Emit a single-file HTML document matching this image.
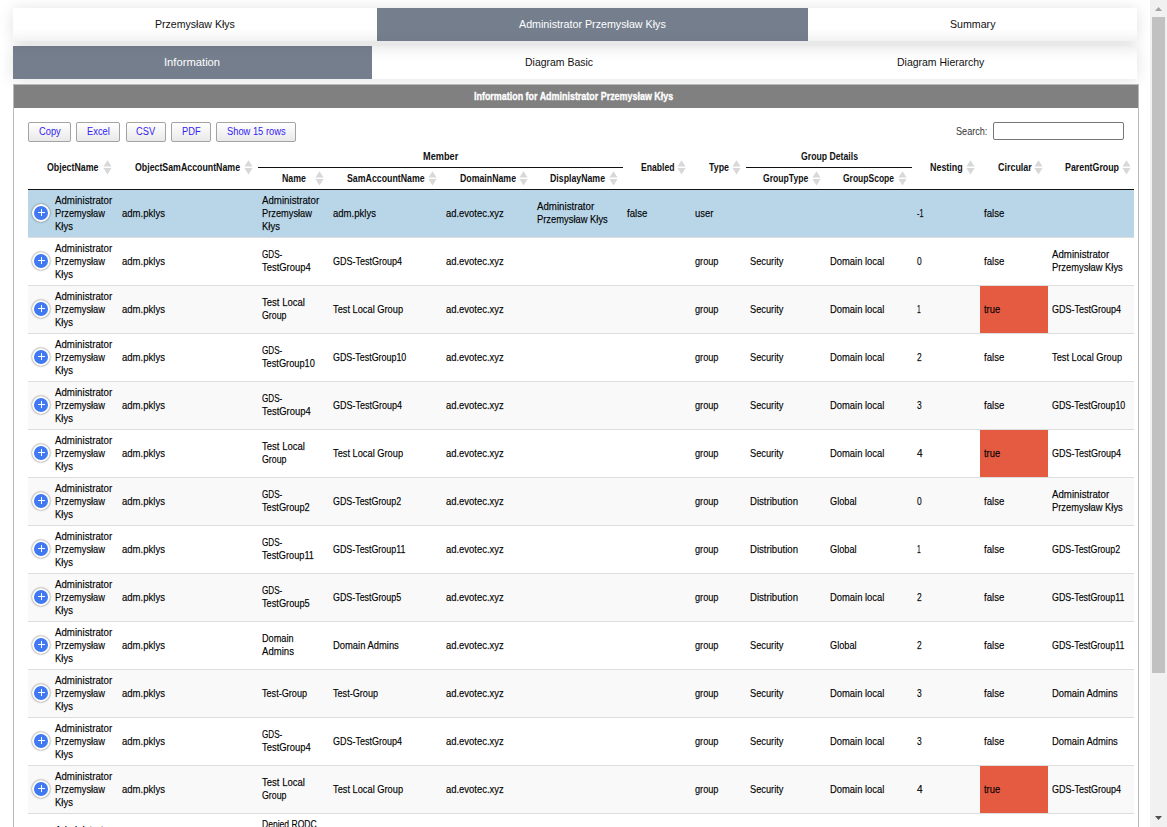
<!DOCTYPE html>
<html><head><meta charset="utf-8"><title>Information</title><style>
html,body{margin:0;padding:0;}
body{width:1167px;height:827px;overflow:hidden;position:relative;background:#fff;font-family:"Liberation Sans",sans-serif;}
.r{position:absolute;}
.x{position:absolute;white-space:pre;transform-origin:0 0;line-height:13px;font-family:"Liberation Sans",sans-serif;}
.t{font-size:10.5px;color:#000;-webkit-text-stroke:0.25px rgba(0,0,0,0.6);}
.s{font-size:10.5px;color:#333;}
.ti{font-size:10.5px;font-weight:bold;color:#fff;-webkit-text-stroke:0.3px #fff;}
.h{font-size:10.5px;font-weight:bold;color:#111;}
.tab{font-size:11px;color:#111;}
.bt{font-size:10px;color:#3322f2;}
.btn{position:absolute;box-sizing:border-box;border:1px solid #a3a3a3;border-radius:2px;background:linear-gradient(#ffffff,#e9e9e9);}
.pl{position:absolute;width:14px;height:14px;border:2px solid #fff;border-radius:50%;background:#4179f3;box-shadow:0 0 2px #555;}
</style></head>
<body>
<div class="r" style="left:13px;top:8px;width:1124px;height:33px;background:#fff;"></div>
<div class="r" style="left:13px;top:46px;width:1124px;height:33px;background:#fff;"></div>
<div class="r" style="left:377px;top:8px;width:431px;height:33px;background:#747e8d;"></div>
<div class="r" style="left:13px;top:46px;width:359px;height:33px;background:#747e8d;"></div>
<div class="r" style="left:13px;top:8px;width:1124px;height:33px;box-shadow:0 1px 15px rgba(0,0,0,0.12);"></div>
<div class="r" style="left:13px;top:46px;width:1124px;height:33px;box-shadow:0 1px 15px rgba(0,0,0,0.12);"></div>
<div class="r" style="left:13px;top:27px;width:364px;height:14px;background:linear-gradient(rgba(0,0,0,0),rgba(0,0,0,0.03));"></div>
<div class="r" style="left:808px;top:27px;width:329px;height:14px;background:linear-gradient(rgba(0,0,0,0),rgba(0,0,0,0.03));"></div>
<div class="r" style="left:372px;top:46px;width:765px;height:16px;background:linear-gradient(rgba(0,0,0,0.035),rgba(0,0,0,0));"></div>
<div class="x tab" style="left:154.93px;top:17.59px;transform:scaleX(0.9608)">Przemysław Kłys</div>
<div class="x tab" style="left:519.19px;top:17.79px;transform:scaleX(0.9719);color:#fff">Administrator Przemysław Kłys</div>
<div class="x tab" style="left:949.53px;top:17.59px;transform:scaleX(0.9657)">Summary</div>
<div class="x tab" style="left:164.40px;top:56.19px;transform:scaleX(1.0194);color:#fff">Information</div>
<div class="x tab" style="left:524.66px;top:55.99px;transform:scaleX(0.9509)">Diagram Basic</div>
<div class="x tab" style="left:897.38px;top:55.99px;transform:scaleX(0.9528)">Diagram Hierarchy</div>
<div class="r" style="left:13px;top:84px;width:1124px;height:760px;border:1px solid #b9b9b9;background:#fff;"></div>
<div class="r" style="left:14px;top:85px;width:1124px;height:23px;background:#808080;"></div>
<div class="x ti" style="left:473.76px;top:89.76px;transform:scaleX(0.8507)">Information for Administrator Przemysław Kłys</div>
<div class="btn" style="left:28px;top:122px;width:43px;height:20px"></div>
<div class="x bt" style="left:38.61px;top:125.23px;transform:scaleX(0.9330)">Copy</div>
<div class="btn" style="left:76px;top:122px;width:44px;height:20px"></div>
<div class="x bt" style="left:86.70px;top:125.23px;transform:scaleX(0.9330)">Excel</div>
<div class="btn" style="left:126px;top:122px;width:40px;height:20px"></div>
<div class="x bt" style="left:136.25px;top:125.23px;transform:scaleX(0.9330)">CSV</div>
<div class="btn" style="left:171px;top:122px;width:40px;height:20px"></div>
<div class="x bt" style="left:181.72px;top:125.23px;transform:scaleX(0.9330)">PDF</div>
<div class="btn" style="left:216px;top:122px;width:80px;height:20px"></div>
<div class="x bt" style="left:226.70px;top:125.23px;transform:scaleX(0.9330)">Show 15 rows</div>
<div class="x s" style="left:956.30px;top:124.66px;transform:scaleX(0.8675)">Search:</div>
<div class="r" style="left:993px;top:122px;width:131px;height:18px;box-sizing:border-box;border:1px solid #767676;border-radius:2px;background:#fff"></div>
<div class="x h" style="left:46.80px;top:161.16px;transform:scaleX(0.8395)">ObjectName</div>
<svg class="r" style="left:102.7px;top:160px" width="9" height="15" viewBox="0 0 9 15"><path d="M4.5 0.3 L8.6 6.6 L0.4 6.6 Z M0.4 8.1 L8.6 8.1 L4.5 14.6 Z" fill="#d8d8d8"/></svg>
<div class="x h" style="left:134.60px;top:161.16px;transform:scaleX(0.8371)">ObjectSamAccountName</div>
<svg class="r" style="left:244.1px;top:160px" width="9" height="15" viewBox="0 0 9 15"><path d="M4.5 0.3 L8.6 6.6 L0.4 6.6 Z M0.4 8.1 L8.6 8.1 L4.5 14.6 Z" fill="#d8d8d8"/></svg>
<div class="x h" style="left:640.60px;top:161.16px;transform:scaleX(0.8212)">Enabled</div>
<svg class="r" style="left:676.6px;top:160px" width="9" height="15" viewBox="0 0 9 15"><path d="M4.5 0.3 L8.6 6.6 L0.4 6.6 Z M0.4 8.1 L8.6 8.1 L4.5 14.6 Z" fill="#d8d8d8"/></svg>
<div class="x h" style="left:708.70px;top:161.16px;transform:scaleX(0.8415)">Type</div>
<svg class="r" style="left:731.9px;top:160px" width="9" height="15" viewBox="0 0 9 15"><path d="M4.5 0.3 L8.6 6.6 L0.4 6.6 Z M0.4 8.1 L8.6 8.1 L4.5 14.6 Z" fill="#d8d8d8"/></svg>
<div class="x h" style="left:930.00px;top:161.16px;transform:scaleX(0.8483)">Nesting</div>
<svg class="r" style="left:966.0px;top:160px" width="9" height="15" viewBox="0 0 9 15"><path d="M4.5 0.3 L8.6 6.6 L0.4 6.6 Z M0.4 8.1 L8.6 8.1 L4.5 14.6 Z" fill="#d8d8d8"/></svg>
<div class="x h" style="left:997.50px;top:161.16px;transform:scaleX(0.8513)">Circular</div>
<svg class="r" style="left:1034.1px;top:160px" width="9" height="15" viewBox="0 0 9 15"><path d="M4.5 0.3 L8.6 6.6 L0.4 6.6 Z M0.4 8.1 L8.6 8.1 L4.5 14.6 Z" fill="#d8d8d8"/></svg>
<div class="x h" style="left:1065.40px;top:161.16px;transform:scaleX(0.8418)">ParentGroup</div>
<svg class="r" style="left:1122.0px;top:160px" width="9" height="15" viewBox="0 0 9 15"><path d="M4.5 0.3 L8.6 6.6 L0.4 6.6 Z M0.4 8.1 L8.6 8.1 L4.5 14.6 Z" fill="#d8d8d8"/></svg>
<div class="x h" style="left:281.70px;top:171.66px;transform:scaleX(0.8397)">Name</div>
<svg class="r" style="left:315.2px;top:171px" width="9" height="15" viewBox="0 0 9 15"><path d="M4.5 0.3 L8.6 6.6 L0.4 6.6 Z M0.4 8.1 L8.6 8.1 L4.5 14.6 Z" fill="#d8d8d8"/></svg>
<div class="x h" style="left:346.80px;top:171.66px;transform:scaleX(0.8363)">SamAccountName</div>
<svg class="r" style="left:428.2px;top:171px" width="9" height="15" viewBox="0 0 9 15"><path d="M4.5 0.3 L8.6 6.6 L0.4 6.6 Z M0.4 8.1 L8.6 8.1 L4.5 14.6 Z" fill="#d8d8d8"/></svg>
<div class="x h" style="left:459.60px;top:171.66px;transform:scaleX(0.8346)">DomainName</div>
<svg class="r" style="left:518.9px;top:171px" width="9" height="15" viewBox="0 0 9 15"><path d="M4.5 0.3 L8.6 6.6 L0.4 6.6 Z M0.4 8.1 L8.6 8.1 L4.5 14.6 Z" fill="#d8d8d8"/></svg>
<div class="x h" style="left:550.00px;top:171.66px;transform:scaleX(0.8344)">DisplayName</div>
<svg class="r" style="left:609.0px;top:171px" width="9" height="15" viewBox="0 0 9 15"><path d="M4.5 0.3 L8.6 6.6 L0.4 6.6 Z M0.4 8.1 L8.6 8.1 L4.5 14.6 Z" fill="#d8d8d8"/></svg>
<div class="x h" style="left:763.20px;top:171.66px;transform:scaleX(0.8188)">GroupType</div>
<svg class="r" style="left:812.4px;top:171px" width="9" height="15" viewBox="0 0 9 15"><path d="M4.5 0.3 L8.6 6.6 L0.4 6.6 Z M0.4 8.1 L8.6 8.1 L4.5 14.6 Z" fill="#d8d8d8"/></svg>
<div class="x h" style="left:843.10px;top:171.66px;transform:scaleX(0.8100)">GroupScope</div>
<svg class="r" style="left:898.0px;top:171px" width="9" height="15" viewBox="0 0 9 15"><path d="M4.5 0.3 L8.6 6.6 L0.4 6.6 Z M0.4 8.1 L8.6 8.1 L4.5 14.6 Z" fill="#d8d8d8"/></svg>
<div class="x h" style="left:423.40px;top:149.96px;transform:scaleX(0.8743)">Member</div>
<div class="x h" style="left:800.70px;top:149.96px;transform:scaleX(0.8280)">Group Details</div>
<div class="r" style="left:258px;top:167px;width:365px;height:1px;background:#111;"></div>
<div class="r" style="left:746px;top:167px;width:166px;height:1px;background:#111;"></div>
<div class="r" style="left:28px;top:189px;width:1106px;height:1px;background:#111;"></div>
<div class="r" style="left:28px;top:190px;width:1106px;height:47px;background:#b8d6e8;"></div>
<div class="r" style="left:28px;top:237px;width:1106px;height:1px;background:#ddd;"></div>
<div class="pl" style="left:32px;top:203.7px"></div>
<div class="r" style="left:38px;top:212.0px;width:7px;height:1px;background:#fff"></div>
<div class="r" style="left:41px;top:209.0px;width:1px;height:7px;background:#fff"></div>
<div class="x t" style="left:55.20px;top:193.96px;transform:scaleX(0.9236)">Administrator</div>
<div class="x t" style="left:55.20px;top:206.96px;transform:scaleX(0.8826)">Przemysław</div>
<div class="x t" style="left:55.20px;top:219.96px;transform:scaleX(0.9016)">Kłys</div>
<div class="x t" style="left:121.60px;top:206.96px;transform:scaleX(0.9094)">adm.pklys</div>
<div class="x t" style="left:262.30px;top:193.96px;transform:scaleX(0.9236)">Administrator</div>
<div class="x t" style="left:262.30px;top:206.96px;transform:scaleX(0.8826)">Przemysław</div>
<div class="x t" style="left:262.30px;top:219.96px;transform:scaleX(0.9016)">Kłys</div>
<div class="x t" style="left:333.30px;top:206.96px;transform:scaleX(0.9094)">adm.pklys</div>
<div class="x t" style="left:446.40px;top:206.96px;transform:scaleX(0.8984)">ad.evotec.xyz</div>
<div class="x t" style="left:537.20px;top:200.46px;transform:scaleX(0.9236)">Administrator</div>
<div class="x t" style="left:537.20px;top:213.46px;transform:scaleX(0.8920)">Przemysław Kłys</div>
<div class="x t" style="left:627.10px;top:206.96px;transform:scaleX(0.9178)">false</div>
<div class="x t" style="left:695.30px;top:206.96px;transform:scaleX(0.8968)">user</div>
<div class="x t" style="left:916.50px;top:206.96px;transform:scaleX(0.6823)">-1</div>
<div class="x t" style="left:984.20px;top:206.96px;transform:scaleX(0.9178)">false</div>
<div class="r" style="left:28px;top:238px;width:1106px;height:47px;background:#fff;"></div>
<div class="r" style="left:28px;top:285px;width:1106px;height:1px;background:#ddd;"></div>
<div class="pl" style="left:32px;top:251.7px"></div>
<div class="r" style="left:38px;top:260.0px;width:7px;height:1px;background:#fff"></div>
<div class="r" style="left:41px;top:257.0px;width:1px;height:7px;background:#fff"></div>
<div class="x t" style="left:55.20px;top:241.96px;transform:scaleX(0.9236)">Administrator</div>
<div class="x t" style="left:55.20px;top:254.96px;transform:scaleX(0.8826)">Przemysław</div>
<div class="x t" style="left:55.20px;top:267.96px;transform:scaleX(0.9016)">Kłys</div>
<div class="x t" style="left:121.60px;top:254.96px;transform:scaleX(0.9094)">adm.pklys</div>
<div class="x t" style="left:262.30px;top:248.46px;transform:scaleX(0.7733)">GDS-</div>
<div class="x t" style="left:262.30px;top:261.46px;transform:scaleX(0.8956)">TestGroup4</div>
<div class="x t" style="left:333.30px;top:254.96px;transform:scaleX(0.8574)">GDS-TestGroup4</div>
<div class="x t" style="left:446.40px;top:254.96px;transform:scaleX(0.8984)">ad.evotec.xyz</div>
<div class="x t" style="left:695.30px;top:254.96px;transform:scaleX(0.8736)">group</div>
<div class="x t" style="left:750.30px;top:254.96px;transform:scaleX(0.8811)">Security</div>
<div class="x t" style="left:830.10px;top:254.96px;transform:scaleX(0.8954)">Domain local</div>
<div class="x t" style="left:916.50px;top:254.96px;transform:scaleX(0.8025)">0</div>
<div class="x t" style="left:984.20px;top:254.96px;transform:scaleX(0.9178)">false</div>
<div class="x t" style="left:1052.30px;top:248.46px;transform:scaleX(0.9236)">Administrator</div>
<div class="x t" style="left:1052.30px;top:261.46px;transform:scaleX(0.8920)">Przemysław Kłys</div>
<div class="r" style="left:28px;top:286px;width:1106px;height:47px;background:#f9f9f9;"></div>
<div class="r" style="left:28px;top:333px;width:1106px;height:1px;background:#ddd;"></div>
<div class="r" style="left:980px;top:286px;width:68px;height:47px;background:#e55b42;"></div>
<div class="pl" style="left:32px;top:299.7px"></div>
<div class="r" style="left:38px;top:308.0px;width:7px;height:1px;background:#fff"></div>
<div class="r" style="left:41px;top:305.0px;width:1px;height:7px;background:#fff"></div>
<div class="x t" style="left:55.20px;top:289.96px;transform:scaleX(0.9236)">Administrator</div>
<div class="x t" style="left:55.20px;top:302.96px;transform:scaleX(0.8826)">Przemysław</div>
<div class="x t" style="left:55.20px;top:315.96px;transform:scaleX(0.9016)">Kłys</div>
<div class="x t" style="left:121.60px;top:302.96px;transform:scaleX(0.9094)">adm.pklys</div>
<div class="x t" style="left:262.30px;top:296.46px;transform:scaleX(0.9077)">Test Local</div>
<div class="x t" style="left:262.30px;top:309.46px;transform:scaleX(0.8396)">Group</div>
<div class="x t" style="left:333.30px;top:302.96px;transform:scaleX(0.8824)">Test Local Group</div>
<div class="x t" style="left:446.40px;top:302.96px;transform:scaleX(0.8984)">ad.evotec.xyz</div>
<div class="x t" style="left:695.30px;top:302.96px;transform:scaleX(0.8736)">group</div>
<div class="x t" style="left:750.30px;top:302.96px;transform:scaleX(0.8811)">Security</div>
<div class="x t" style="left:830.10px;top:302.96px;transform:scaleX(0.8954)">Domain local</div>
<div class="x t" style="left:916.50px;top:302.96px;transform:scaleX(0.6420)">1</div>
<div class="x t" style="left:984.20px;top:302.96px;transform:scaleX(0.8929)">true</div>
<div class="x t" style="left:1052.30px;top:302.96px;transform:scaleX(0.8574)">GDS-TestGroup4</div>
<div class="r" style="left:28px;top:334px;width:1106px;height:47px;background:#fff;"></div>
<div class="r" style="left:28px;top:381px;width:1106px;height:1px;background:#ddd;"></div>
<div class="pl" style="left:32px;top:347.7px"></div>
<div class="r" style="left:38px;top:356.0px;width:7px;height:1px;background:#fff"></div>
<div class="r" style="left:41px;top:353.0px;width:1px;height:7px;background:#fff"></div>
<div class="x t" style="left:55.20px;top:337.96px;transform:scaleX(0.9236)">Administrator</div>
<div class="x t" style="left:55.20px;top:350.96px;transform:scaleX(0.8826)">Przemysław</div>
<div class="x t" style="left:55.20px;top:363.96px;transform:scaleX(0.9016)">Kłys</div>
<div class="x t" style="left:121.60px;top:350.96px;transform:scaleX(0.9094)">adm.pklys</div>
<div class="x t" style="left:262.30px;top:344.46px;transform:scaleX(0.7733)">GDS-</div>
<div class="x t" style="left:262.30px;top:357.46px;transform:scaleX(0.8796)">TestGroup10</div>
<div class="x t" style="left:333.30px;top:350.96px;transform:scaleX(0.8488)">GDS-TestGroup10</div>
<div class="x t" style="left:446.40px;top:350.96px;transform:scaleX(0.8984)">ad.evotec.xyz</div>
<div class="x t" style="left:695.30px;top:350.96px;transform:scaleX(0.8736)">group</div>
<div class="x t" style="left:750.30px;top:350.96px;transform:scaleX(0.8811)">Security</div>
<div class="x t" style="left:830.10px;top:350.96px;transform:scaleX(0.8954)">Domain local</div>
<div class="x t" style="left:916.50px;top:350.96px;transform:scaleX(0.8025)">2</div>
<div class="x t" style="left:984.20px;top:350.96px;transform:scaleX(0.9178)">false</div>
<div class="x t" style="left:1052.30px;top:350.96px;transform:scaleX(0.8824)">Test Local Group</div>
<div class="r" style="left:28px;top:382px;width:1106px;height:47px;background:#f9f9f9;"></div>
<div class="r" style="left:28px;top:429px;width:1106px;height:1px;background:#ddd;"></div>
<div class="pl" style="left:32px;top:395.7px"></div>
<div class="r" style="left:38px;top:404.0px;width:7px;height:1px;background:#fff"></div>
<div class="r" style="left:41px;top:401.0px;width:1px;height:7px;background:#fff"></div>
<div class="x t" style="left:55.20px;top:385.96px;transform:scaleX(0.9236)">Administrator</div>
<div class="x t" style="left:55.20px;top:398.96px;transform:scaleX(0.8826)">Przemysław</div>
<div class="x t" style="left:55.20px;top:411.96px;transform:scaleX(0.9016)">Kłys</div>
<div class="x t" style="left:121.60px;top:398.96px;transform:scaleX(0.9094)">adm.pklys</div>
<div class="x t" style="left:262.30px;top:392.46px;transform:scaleX(0.7733)">GDS-</div>
<div class="x t" style="left:262.30px;top:405.46px;transform:scaleX(0.8956)">TestGroup4</div>
<div class="x t" style="left:333.30px;top:398.96px;transform:scaleX(0.8574)">GDS-TestGroup4</div>
<div class="x t" style="left:446.40px;top:398.96px;transform:scaleX(0.8984)">ad.evotec.xyz</div>
<div class="x t" style="left:695.30px;top:398.96px;transform:scaleX(0.8736)">group</div>
<div class="x t" style="left:750.30px;top:398.96px;transform:scaleX(0.8811)">Security</div>
<div class="x t" style="left:830.10px;top:398.96px;transform:scaleX(0.8954)">Domain local</div>
<div class="x t" style="left:916.50px;top:398.96px;transform:scaleX(0.8025)">3</div>
<div class="x t" style="left:984.20px;top:398.96px;transform:scaleX(0.9178)">false</div>
<div class="x t" style="left:1052.30px;top:398.96px;transform:scaleX(0.8488)">GDS-TestGroup10</div>
<div class="r" style="left:28px;top:430px;width:1106px;height:47px;background:#fff;"></div>
<div class="r" style="left:28px;top:477px;width:1106px;height:1px;background:#ddd;"></div>
<div class="r" style="left:980px;top:430px;width:68px;height:47px;background:#e55b42;"></div>
<div class="pl" style="left:32px;top:443.7px"></div>
<div class="r" style="left:38px;top:452.0px;width:7px;height:1px;background:#fff"></div>
<div class="r" style="left:41px;top:449.0px;width:1px;height:7px;background:#fff"></div>
<div class="x t" style="left:55.20px;top:433.96px;transform:scaleX(0.9236)">Administrator</div>
<div class="x t" style="left:55.20px;top:446.96px;transform:scaleX(0.8826)">Przemysław</div>
<div class="x t" style="left:55.20px;top:459.96px;transform:scaleX(0.9016)">Kłys</div>
<div class="x t" style="left:121.60px;top:446.96px;transform:scaleX(0.9094)">adm.pklys</div>
<div class="x t" style="left:262.30px;top:440.46px;transform:scaleX(0.9077)">Test Local</div>
<div class="x t" style="left:262.30px;top:453.46px;transform:scaleX(0.8396)">Group</div>
<div class="x t" style="left:333.30px;top:446.96px;transform:scaleX(0.8824)">Test Local Group</div>
<div class="x t" style="left:446.40px;top:446.96px;transform:scaleX(0.8984)">ad.evotec.xyz</div>
<div class="x t" style="left:695.30px;top:446.96px;transform:scaleX(0.8736)">group</div>
<div class="x t" style="left:750.30px;top:446.96px;transform:scaleX(0.8811)">Security</div>
<div class="x t" style="left:830.10px;top:446.96px;transform:scaleX(0.8954)">Domain local</div>
<div class="x t" style="left:916.50px;top:446.96px;transform:scaleX(0.9630)">4</div>
<div class="x t" style="left:984.20px;top:446.96px;transform:scaleX(0.8929)">true</div>
<div class="x t" style="left:1052.30px;top:446.96px;transform:scaleX(0.8574)">GDS-TestGroup4</div>
<div class="r" style="left:28px;top:478px;width:1106px;height:47px;background:#f9f9f9;"></div>
<div class="r" style="left:28px;top:525px;width:1106px;height:1px;background:#ddd;"></div>
<div class="pl" style="left:32px;top:491.7px"></div>
<div class="r" style="left:38px;top:500.0px;width:7px;height:1px;background:#fff"></div>
<div class="r" style="left:41px;top:497.0px;width:1px;height:7px;background:#fff"></div>
<div class="x t" style="left:55.20px;top:481.96px;transform:scaleX(0.9236)">Administrator</div>
<div class="x t" style="left:55.20px;top:494.96px;transform:scaleX(0.8826)">Przemysław</div>
<div class="x t" style="left:55.20px;top:507.96px;transform:scaleX(0.9016)">Kłys</div>
<div class="x t" style="left:121.60px;top:494.96px;transform:scaleX(0.9094)">adm.pklys</div>
<div class="x t" style="left:262.30px;top:488.46px;transform:scaleX(0.7733)">GDS-</div>
<div class="x t" style="left:262.30px;top:501.46px;transform:scaleX(0.8779)">TestGroup2</div>
<div class="x t" style="left:333.30px;top:494.96px;transform:scaleX(0.8454)">GDS-TestGroup2</div>
<div class="x t" style="left:446.40px;top:494.96px;transform:scaleX(0.8984)">ad.evotec.xyz</div>
<div class="x t" style="left:695.30px;top:494.96px;transform:scaleX(0.8736)">group</div>
<div class="x t" style="left:750.30px;top:494.96px;transform:scaleX(0.9139)">Distribution</div>
<div class="x t" style="left:830.10px;top:494.96px;transform:scaleX(0.8738)">Global</div>
<div class="x t" style="left:916.50px;top:494.96px;transform:scaleX(0.8025)">0</div>
<div class="x t" style="left:984.20px;top:494.96px;transform:scaleX(0.9178)">false</div>
<div class="x t" style="left:1052.30px;top:488.46px;transform:scaleX(0.9236)">Administrator</div>
<div class="x t" style="left:1052.30px;top:501.46px;transform:scaleX(0.8920)">Przemysław Kłys</div>
<div class="r" style="left:28px;top:526px;width:1106px;height:47px;background:#fff;"></div>
<div class="r" style="left:28px;top:573px;width:1106px;height:1px;background:#ddd;"></div>
<div class="pl" style="left:32px;top:539.7px"></div>
<div class="r" style="left:38px;top:548.0px;width:7px;height:1px;background:#fff"></div>
<div class="r" style="left:41px;top:545.0px;width:1px;height:7px;background:#fff"></div>
<div class="x t" style="left:55.20px;top:529.96px;transform:scaleX(0.9236)">Administrator</div>
<div class="x t" style="left:55.20px;top:542.96px;transform:scaleX(0.8826)">Przemysław</div>
<div class="x t" style="left:55.20px;top:555.96px;transform:scaleX(0.9016)">Kłys</div>
<div class="x t" style="left:121.60px;top:542.96px;transform:scaleX(0.9094)">adm.pklys</div>
<div class="x t" style="left:262.30px;top:536.46px;transform:scaleX(0.7733)">GDS-</div>
<div class="x t" style="left:262.30px;top:549.46px;transform:scaleX(0.8749)">TestGroup11</div>
<div class="x t" style="left:333.30px;top:542.96px;transform:scaleX(0.8453)">GDS-TestGroup11</div>
<div class="x t" style="left:446.40px;top:542.96px;transform:scaleX(0.8984)">ad.evotec.xyz</div>
<div class="x t" style="left:695.30px;top:542.96px;transform:scaleX(0.8736)">group</div>
<div class="x t" style="left:750.30px;top:542.96px;transform:scaleX(0.9139)">Distribution</div>
<div class="x t" style="left:830.10px;top:542.96px;transform:scaleX(0.8738)">Global</div>
<div class="x t" style="left:916.50px;top:542.96px;transform:scaleX(0.6420)">1</div>
<div class="x t" style="left:984.20px;top:542.96px;transform:scaleX(0.9178)">false</div>
<div class="x t" style="left:1052.30px;top:542.96px;transform:scaleX(0.8454)">GDS-TestGroup2</div>
<div class="r" style="left:28px;top:574px;width:1106px;height:47px;background:#f9f9f9;"></div>
<div class="r" style="left:28px;top:621px;width:1106px;height:1px;background:#ddd;"></div>
<div class="pl" style="left:32px;top:587.7px"></div>
<div class="r" style="left:38px;top:596.0px;width:7px;height:1px;background:#fff"></div>
<div class="r" style="left:41px;top:593.0px;width:1px;height:7px;background:#fff"></div>
<div class="x t" style="left:55.20px;top:577.96px;transform:scaleX(0.9236)">Administrator</div>
<div class="x t" style="left:55.20px;top:590.96px;transform:scaleX(0.8826)">Przemysław</div>
<div class="x t" style="left:55.20px;top:603.96px;transform:scaleX(0.9016)">Kłys</div>
<div class="x t" style="left:121.60px;top:590.96px;transform:scaleX(0.9094)">adm.pklys</div>
<div class="x t" style="left:262.30px;top:584.46px;transform:scaleX(0.7733)">GDS-</div>
<div class="x t" style="left:262.30px;top:597.46px;transform:scaleX(0.8779)">TestGroup5</div>
<div class="x t" style="left:333.30px;top:590.96px;transform:scaleX(0.8454)">GDS-TestGroup5</div>
<div class="x t" style="left:446.40px;top:590.96px;transform:scaleX(0.8984)">ad.evotec.xyz</div>
<div class="x t" style="left:695.30px;top:590.96px;transform:scaleX(0.8736)">group</div>
<div class="x t" style="left:750.30px;top:590.96px;transform:scaleX(0.9139)">Distribution</div>
<div class="x t" style="left:830.10px;top:590.96px;transform:scaleX(0.8954)">Domain local</div>
<div class="x t" style="left:916.50px;top:590.96px;transform:scaleX(0.8025)">2</div>
<div class="x t" style="left:984.20px;top:590.96px;transform:scaleX(0.9178)">false</div>
<div class="x t" style="left:1052.30px;top:590.96px;transform:scaleX(0.8453)">GDS-TestGroup11</div>
<div class="r" style="left:28px;top:622px;width:1106px;height:47px;background:#fff;"></div>
<div class="r" style="left:28px;top:669px;width:1106px;height:1px;background:#ddd;"></div>
<div class="pl" style="left:32px;top:635.7px"></div>
<div class="r" style="left:38px;top:644.0px;width:7px;height:1px;background:#fff"></div>
<div class="r" style="left:41px;top:641.0px;width:1px;height:7px;background:#fff"></div>
<div class="x t" style="left:55.20px;top:625.96px;transform:scaleX(0.9236)">Administrator</div>
<div class="x t" style="left:55.20px;top:638.96px;transform:scaleX(0.8826)">Przemysław</div>
<div class="x t" style="left:55.20px;top:651.96px;transform:scaleX(0.9016)">Kłys</div>
<div class="x t" style="left:121.60px;top:638.96px;transform:scaleX(0.9094)">adm.pklys</div>
<div class="x t" style="left:262.30px;top:632.46px;transform:scaleX(0.8712)">Domain</div>
<div class="x t" style="left:262.30px;top:645.46px;transform:scaleX(0.9124)">Admins</div>
<div class="x t" style="left:333.30px;top:638.96px;transform:scaleX(0.8952)">Domain Admins</div>
<div class="x t" style="left:446.40px;top:638.96px;transform:scaleX(0.8984)">ad.evotec.xyz</div>
<div class="x t" style="left:695.30px;top:638.96px;transform:scaleX(0.8736)">group</div>
<div class="x t" style="left:750.30px;top:638.96px;transform:scaleX(0.8811)">Security</div>
<div class="x t" style="left:830.10px;top:638.96px;transform:scaleX(0.8738)">Global</div>
<div class="x t" style="left:916.50px;top:638.96px;transform:scaleX(0.8025)">2</div>
<div class="x t" style="left:984.20px;top:638.96px;transform:scaleX(0.9178)">false</div>
<div class="x t" style="left:1052.30px;top:638.96px;transform:scaleX(0.8453)">GDS-TestGroup11</div>
<div class="r" style="left:28px;top:670px;width:1106px;height:47px;background:#f9f9f9;"></div>
<div class="r" style="left:28px;top:717px;width:1106px;height:1px;background:#ddd;"></div>
<div class="pl" style="left:32px;top:683.7px"></div>
<div class="r" style="left:38px;top:692.0px;width:7px;height:1px;background:#fff"></div>
<div class="r" style="left:41px;top:689.0px;width:1px;height:7px;background:#fff"></div>
<div class="x t" style="left:55.20px;top:673.96px;transform:scaleX(0.9236)">Administrator</div>
<div class="x t" style="left:55.20px;top:686.96px;transform:scaleX(0.8826)">Przemysław</div>
<div class="x t" style="left:55.20px;top:699.96px;transform:scaleX(0.9016)">Kłys</div>
<div class="x t" style="left:121.60px;top:686.96px;transform:scaleX(0.9094)">adm.pklys</div>
<div class="x t" style="left:262.30px;top:686.96px;transform:scaleX(0.8675)">Test-Group</div>
<div class="x t" style="left:333.30px;top:686.96px;transform:scaleX(0.8675)">Test-Group</div>
<div class="x t" style="left:446.40px;top:686.96px;transform:scaleX(0.8984)">ad.evotec.xyz</div>
<div class="x t" style="left:695.30px;top:686.96px;transform:scaleX(0.8736)">group</div>
<div class="x t" style="left:750.30px;top:686.96px;transform:scaleX(0.8811)">Security</div>
<div class="x t" style="left:830.10px;top:686.96px;transform:scaleX(0.8954)">Domain local</div>
<div class="x t" style="left:916.50px;top:686.96px;transform:scaleX(0.8025)">3</div>
<div class="x t" style="left:984.20px;top:686.96px;transform:scaleX(0.9178)">false</div>
<div class="x t" style="left:1052.30px;top:686.96px;transform:scaleX(0.8952)">Domain Admins</div>
<div class="r" style="left:28px;top:718px;width:1106px;height:47px;background:#fff;"></div>
<div class="r" style="left:28px;top:765px;width:1106px;height:1px;background:#ddd;"></div>
<div class="pl" style="left:32px;top:731.7px"></div>
<div class="r" style="left:38px;top:740.0px;width:7px;height:1px;background:#fff"></div>
<div class="r" style="left:41px;top:737.0px;width:1px;height:7px;background:#fff"></div>
<div class="x t" style="left:55.20px;top:721.96px;transform:scaleX(0.9236)">Administrator</div>
<div class="x t" style="left:55.20px;top:734.96px;transform:scaleX(0.8826)">Przemysław</div>
<div class="x t" style="left:55.20px;top:747.96px;transform:scaleX(0.9016)">Kłys</div>
<div class="x t" style="left:121.60px;top:734.96px;transform:scaleX(0.9094)">adm.pklys</div>
<div class="x t" style="left:262.30px;top:728.46px;transform:scaleX(0.7733)">GDS-</div>
<div class="x t" style="left:262.30px;top:741.46px;transform:scaleX(0.8956)">TestGroup4</div>
<div class="x t" style="left:333.30px;top:734.96px;transform:scaleX(0.8574)">GDS-TestGroup4</div>
<div class="x t" style="left:446.40px;top:734.96px;transform:scaleX(0.8984)">ad.evotec.xyz</div>
<div class="x t" style="left:695.30px;top:734.96px;transform:scaleX(0.8736)">group</div>
<div class="x t" style="left:750.30px;top:734.96px;transform:scaleX(0.8811)">Security</div>
<div class="x t" style="left:830.10px;top:734.96px;transform:scaleX(0.8954)">Domain local</div>
<div class="x t" style="left:916.50px;top:734.96px;transform:scaleX(0.8025)">3</div>
<div class="x t" style="left:984.20px;top:734.96px;transform:scaleX(0.9178)">false</div>
<div class="x t" style="left:1052.30px;top:734.96px;transform:scaleX(0.8952)">Domain Admins</div>
<div class="r" style="left:28px;top:766px;width:1106px;height:47px;background:#f9f9f9;"></div>
<div class="r" style="left:28px;top:813px;width:1106px;height:1px;background:#ddd;"></div>
<div class="r" style="left:980px;top:766px;width:68px;height:47px;background:#e55b42;"></div>
<div class="pl" style="left:32px;top:779.7px"></div>
<div class="r" style="left:38px;top:788.0px;width:7px;height:1px;background:#fff"></div>
<div class="r" style="left:41px;top:785.0px;width:1px;height:7px;background:#fff"></div>
<div class="x t" style="left:55.20px;top:769.96px;transform:scaleX(0.9236)">Administrator</div>
<div class="x t" style="left:55.20px;top:782.96px;transform:scaleX(0.8826)">Przemysław</div>
<div class="x t" style="left:55.20px;top:795.96px;transform:scaleX(0.9016)">Kłys</div>
<div class="x t" style="left:121.60px;top:782.96px;transform:scaleX(0.9094)">adm.pklys</div>
<div class="x t" style="left:262.30px;top:776.46px;transform:scaleX(0.9077)">Test Local</div>
<div class="x t" style="left:262.30px;top:789.46px;transform:scaleX(0.8396)">Group</div>
<div class="x t" style="left:333.30px;top:782.96px;transform:scaleX(0.8824)">Test Local Group</div>
<div class="x t" style="left:446.40px;top:782.96px;transform:scaleX(0.8984)">ad.evotec.xyz</div>
<div class="x t" style="left:695.30px;top:782.96px;transform:scaleX(0.8736)">group</div>
<div class="x t" style="left:750.30px;top:782.96px;transform:scaleX(0.8811)">Security</div>
<div class="x t" style="left:830.10px;top:782.96px;transform:scaleX(0.8954)">Domain local</div>
<div class="x t" style="left:916.50px;top:782.96px;transform:scaleX(0.9630)">4</div>
<div class="x t" style="left:984.20px;top:782.96px;transform:scaleX(0.8929)">true</div>
<div class="x t" style="left:1052.30px;top:782.96px;transform:scaleX(0.8574)">GDS-TestGroup4</div>
<div class="r" style="left:28px;top:814px;width:1106px;height:60px;background:#fff;"></div>
<div class="pl" style="left:32px;top:834.5px"></div>
<div class="x t" style="left:55.20px;top:824.46px;transform:scaleX(0.9236)">Administrator</div>
<div class="x t" style="left:55.20px;top:837.46px;transform:scaleX(0.8826)">Przemysław</div>
<div class="x t" style="left:55.20px;top:850.46px;transform:scaleX(0.9016)">Kłys</div>
<div class="x t" style="left:262.30px;top:817.96px;transform:scaleX(0.8151)">Denied RODC</div>
<div class="x t" style="left:262.30px;top:830.96px;transform:scaleX(0.8797)">Password</div>
<div class="x t" style="left:262.30px;top:843.96px;transform:scaleX(0.8893)">Replication</div>
<div class="x t" style="left:262.30px;top:856.96px;transform:scaleX(0.8396)">Group</div>
<div class="r" style="left:1150px;top:0px;width:17px;height:827px;background:#f1f1f1;"></div>
<div class="r" style="left:1152px;top:17px;width:13px;height:656px;background:#c1c1c1;"></div>
<svg class="r" style="left:1150px;top:0" width="17" height="17" viewBox="0 0 17 17"><path d="M5 11 L8.5 7 L12 11 Z" fill="#a3a3a3"/></svg>
<svg class="r" style="left:1150px;top:810px" width="17" height="17" viewBox="0 0 17 17"><path d="M5 6 L8.5 10 L12 6 Z" fill="#505050"/></svg>
</body></html>
